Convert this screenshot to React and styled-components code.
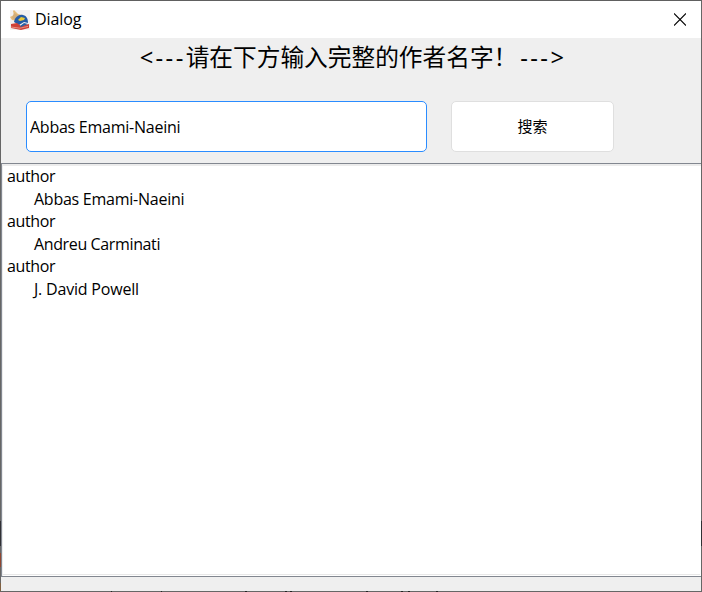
import React from "react";
import styled, { createGlobalStyle } from "styled-components";

const GlobalStyle = createGlobalStyle`
  *, *::before, *::after { box-sizing: border-box; }
  body { margin: 0; overflow: hidden; }
`;

const Window = styled.main`
  position: relative;
  width: 702px;
  height: 592px;
  display: flex;
  flex-direction: column;
  background: #efefef;
  border: 1px solid #666;
  border-top-color: #606060;
  color: #000;
  font: 16px "Open Sans", "Noto Sans CJK SC", sans-serif;
`;

const TitleBar = styled.header`
  height: 37px;
  flex: none;
  display: flex;
  align-items: center;
  background: #fff;
  padding: 0 15px 0 9px;
`;

const Caption = styled.span`
  flex: 1;
  margin: -1px 0 0 5px;
  font-size: 16px;
  letter-spacing: -0.1px;
  line-height: 20px;
`;

const CloseButton = styled.button`
  display: flex;
  padding: 0;
  border: 0;
  background: none;
`;

const Heading = styled.h1`
  height: 40px;
  flex: none;
  display: flex;
  justify-content: center;
  margin: 0;
  padding-left: 4px;
  font-family: "Noto Sans", "Noto Sans CJK SC", sans-serif;
  font-size: 23.7px;
  font-weight: 400;
  line-height: 39px;
  white-space: pre;
`;

const Marker = styled.span`
  font-weight: 400;
  letter-spacing: 2.4px;
  padding-left: ${(p) => p.$gap || "0"};
`;

const SearchRow = styled.form`
  display: flex;
  flex: none;
  gap: 24px;
  height: 85px;
  padding: 23px 0 0 25px;
`;

const AuthorInput = styled.input`
  width: 401px;
  height: 51px;
  padding: 0 3px;
  border: 1px solid #2a8cff;
  border-radius: 5px;
  outline: 0;
  background: #fff;
  color: #000;
  font: inherit;
  letter-spacing: -0.25px;
`;

const SearchButton = styled.button`
  width: 163px;
  height: 51px;
  padding: 0 0 2px;
  border: 1px solid #dfdfdf;
  border-radius: 5px;
  background: #fff;
  color: #000;
  font: 400 15px "Noto Sans CJK SC", sans-serif;
`;

const Results = styled.section`
  height: 414px;
  flex: none;
  border: 1px solid #828790;
  border-right: 0;
  background: #fff;
  box-shadow: inset 1px 2px 0 #ececec, inset -1px -1px 0 #fff, inset -1px -2px 0 #e8e8e8;
  padding: 1px 5px;
`;

const ResultLine = styled.div`
  height: 22.5px;
  line-height: 22px;
  padding-left: ${(p) => (p.$indented ? "27px" : "0")};
  letter-spacing: ${(p) => p.$spacing};
`;

const EdgeShade = styled.svg`
  position: absolute;
  inset: -1px;
  pointer-events: none;
`;

const AppIcon = () => (
  <svg width="20" height="20" viewBox="0 0 20 20">
    <path d="M0 0h20v20H0z" fill="#f2f0ef" />
    <path d="m4 0 4 4 4 1-4 6-6-1-2-3 4-2-1-4z" fill="#e5bb78" />
    <path d="m4 3 4 2-3 5-3-2z" fill="#d2ad79" />
    <path d="M4 12C5 7 9 4 13 5c4 1 5 4 5 8l-4-1-5 3z" fill="#235aa5" />
    <path d="m8 10 3-3 4 1-1 2-4 1z" fill="#e7c735" />
    <path d="m1 14 6-1 4 3 8-2v4l-8 2-10-2z" fill="#cf3f35" />
    <path d="m5 12 5 4 4-3 4 1-7 3z" fill="#2860a2" />
    <path d="m1 17 9 1.2 8-1.8" fill="none" stroke="#edb0a4" strokeWidth=".7" />
  </svg>
);

const lines = [
  { text: "author", spacing: "-0.35px" },
  { text: "Abbas Emami-Naeini", indented: true, spacing: "-0.25px" },
  { text: "author", spacing: "-0.35px" },
  { text: "Andreu Carminati", indented: true, spacing: "-0.37px" },
  { text: "author", spacing: "-0.35px" },
  { text: "J. David Powell", indented: true, spacing: "-0.2px" },
];

export default function App() {
  return (
    <Window>
      <GlobalStyle />
      <TitleBar>
        <AppIcon />
        <Caption>Dialog</Caption>
        <CloseButton type="button" aria-label="Close">
          <svg width="12" height="13" viewBox="0 0 12 13">
            <path d="m0 .5 12 12m0-12-12 12" fill="none" stroke="#000" strokeWidth="1.1" />
          </svg>
        </CloseButton>
      </TitleBar>
      <Heading>
        <Marker>&lt;---</Marker>
        请在下方输入完整的作者名字！
        <Marker $gap="3px">---&gt;</Marker>
      </Heading>
      <SearchRow onSubmit={(e) => e.preventDefault()}>
        <AuthorInput defaultValue="Abbas Emami-Naeini" />
        <SearchButton>搜索</SearchButton>
      </SearchRow>
      <Results>
        {lines.map((line, i) => (
          <ResultLine key={i} $indented={line.indented} $spacing={line.spacing}>
            {line.text}
          </ResultLine>
        ))}
      </Results>
      <EdgeShade width="702" height="592" shapeRendering="crispEdges">
        <path d="M0 521h1v25H0zM701 521h1v25h-1z" fill="#303034" />
        <path d="M0 553h1v14H0z" fill="#914630" />
        <path d="M0 583h1v8H0z" fill="#806040" />
        <path
          d="M111 591h1m49 0h1m83 0h2m38 0h2m3 0h2m74 0h2m33 0h2m5 0h2m26 0h2"
          transform="translate(0 .5)"
          stroke="#222"
        />
      </EdgeShade>
    </Window>
  );
}
